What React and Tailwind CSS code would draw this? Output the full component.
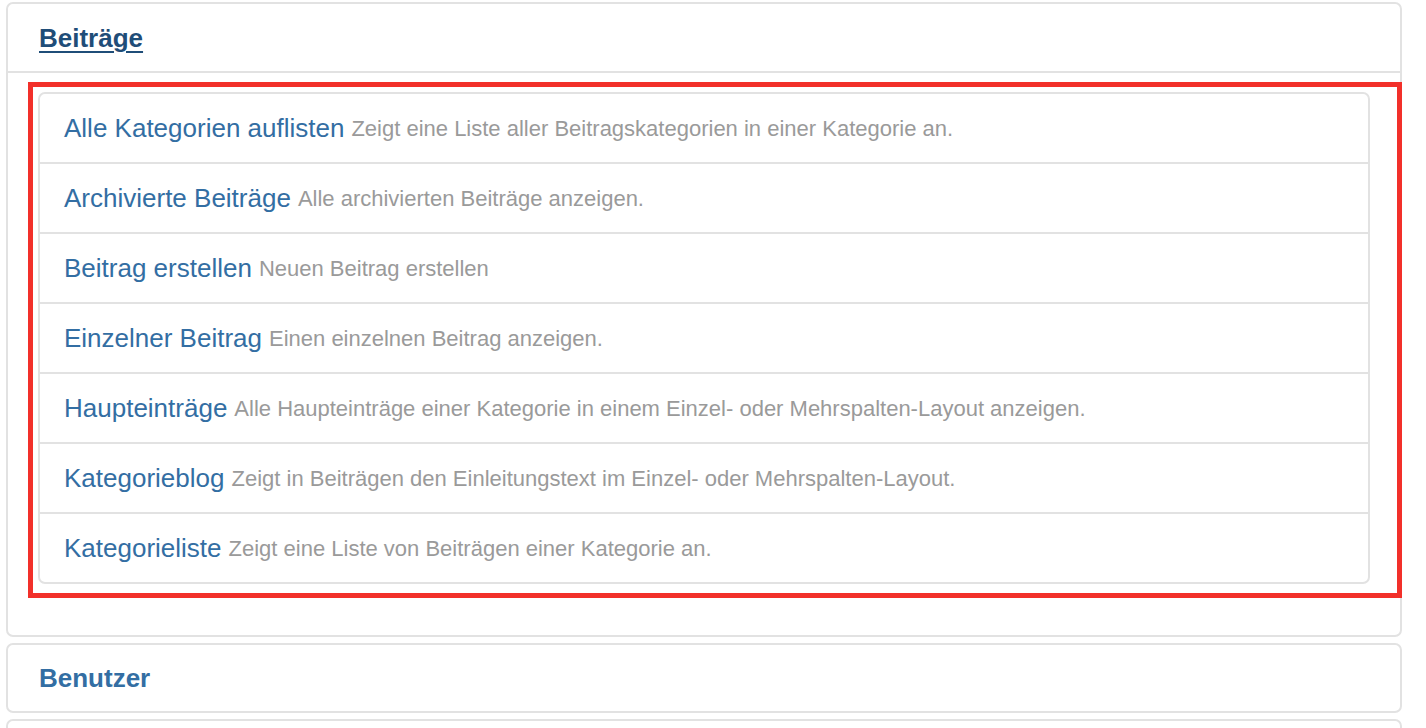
import React from "react";

const rows = [
  ["Alle Kategorien auflisten", "Zeigt eine Liste aller Beitragskategorien in einer Kategorie an."],
  ["Archivierte Beiträge", "Alle archivierten Beiträge anzeigen."],
  ["Beitrag erstellen", "Neuen Beitrag erstellen"],
  ["Einzelner Beitrag", "Einen einzelnen Beitrag anzeigen."],
  ["Haupteinträge", "Alle Haupteinträge einer Kategorie in einem Einzel- oder Mehrspalten-Layout anzeigen."],
  ["Kategorieblog", "Zeigt in Beiträgen den Einleitungstext im Einzel- oder Mehrspalten-Layout."],
  ["Kategorieliste", "Zeigt eine Liste von Beiträgen einer Kategorie an."],
];

export default function App() {
  return (
    <div
      className="w-[1426px] h-[728px] overflow-hidden bg-white pt-[2px] pl-[6px] pr-[24px]"
      style={{ fontFamily: '"Liberation Sans", Arial, sans-serif' }}
    >
      <div className="border-2 border-[#e2e2e2] rounded-[7px]">
        <div className="h-[69px] border-b-2 border-[#e2e2e2] flex items-center px-[31px] pt-[2px]">
          <span className="text-[26px] font-bold text-[#1f4d78] underline underline-offset-[4px] decoration-2">
            Beiträge
          </span>
        </div>
        <div className="relative pt-[19px] pb-[51px] px-[30px]">
          <div className="border-2 border-[#e2e2e2] rounded-[7px]">
            {rows.map(([t, d], i) =>
              i < rows.length - 1 ? (
                <div
                  key={t}
                  className="h-[70px] flex items-center px-[24px] whitespace-nowrap border-b-2 border-[#e2e2e2]"
                >
                  <span className="text-[26px] text-[#336ea3]">{t}</span>
                  <span className="text-[22px] text-[#9a9a9a] ml-[7px]">{d}</span>
                </div>
              ) : (
                <div key={t} className="h-[68px] flex items-center px-[24px] whitespace-nowrap">
                  <span className="text-[26px] text-[#336ea3]">{t}</span>
                  <span className="text-[22px] text-[#9a9a9a] ml-[7px]">{d}</span>
                </div>
              )
            )}
          </div>
          <div className="absolute left-[20px] top-[9px] right-[-2px] bottom-[37px] border-[5px] border-[#f2302a] pointer-events-none" />
        </div>
      </div>
      <div className="mt-[6px] border-2 border-[#e2e2e2] rounded-[7px] h-[70px] flex items-center px-[31px]">
        <span className="text-[26px] font-bold text-[#336ea3]">Benutzer</span>
      </div>
      <div className="mt-[6px] border-2 border-[#e2e2e2] rounded-[7px] h-[70px]" />
    </div>
  );
}
